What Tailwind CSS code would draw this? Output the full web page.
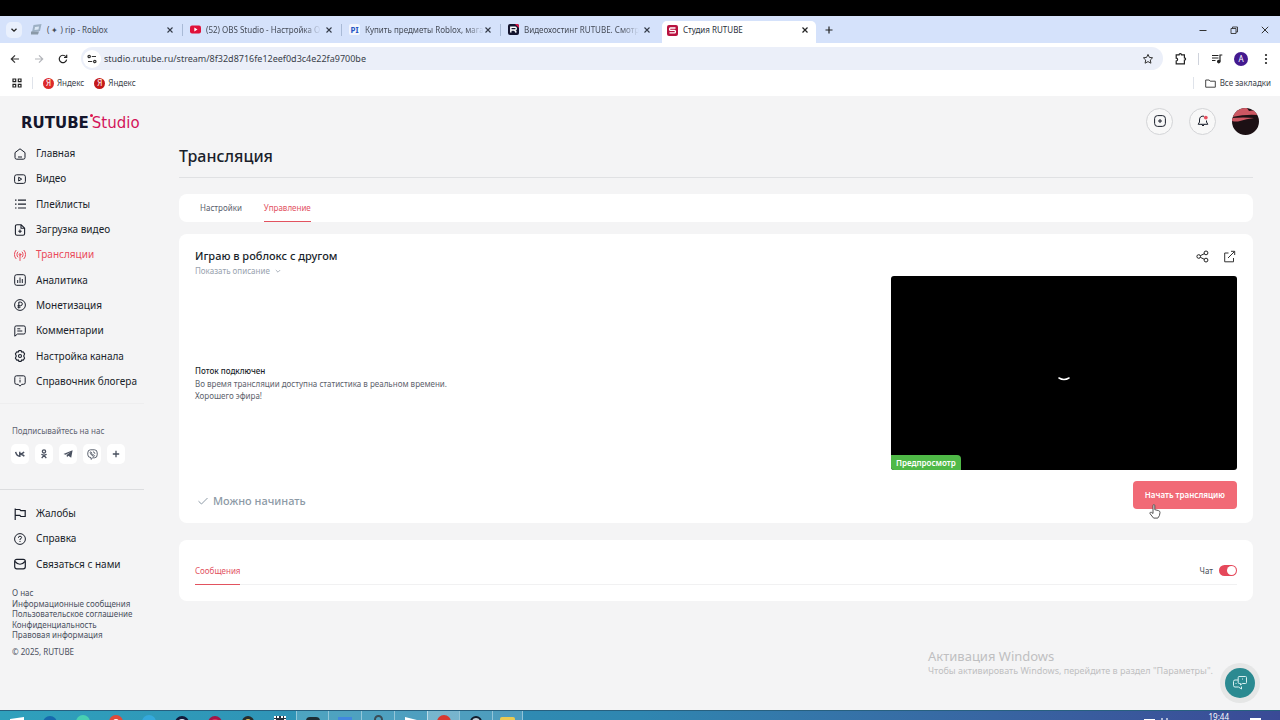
<!DOCTYPE html>
<html lang="ru">
<head>
<meta charset="utf-8">
<meta name="viewport" content="width=device-width, initial-scale=1">
<title>Студия RUTUBE</title>
<script src="https://cdn.jsdelivr.net/npm/@tailwindcss/browser@4"></script>
</head>
<body class="flex h-screen flex-col overflow-hidden bg-[#f4f4f5] font-['Noto_Sans','Open_Sans',sans-serif] text-[#1a1f2b]">

<div class="h-4 shrink-0 bg-black"></div>

<!-- Browser tab strip -->
<div class="flex h-[27px] shrink-0 items-end bg-[#d5e2fb] text-[8px] text-[#454b57]">
  <div class="flex h-full w-[26px] items-center pl-[6px]">
    <button aria-label="Поиск вкладок" class="flex size-4 items-center justify-center rounded-[5px] bg-[#e9f0fd]">
      <svg class="size-2" viewBox="0 0 8 8" fill="none" stroke="#222" stroke-width="1.3"><path d="M1.5 2.8 4 5.2l2.500-2.400"/></svg>
    </button>
  </div>
  <div class="flex h-full w-[159px] items-center pr-[2px] pl-[5px]">
    <svg class="size-[11px] shrink-0" viewBox="0 0 11 11"><path d="M2.500 1 10.500 0 9 7 1 8z" fill="#9db0c4"/><path d="M4 3 8 2.500 7.500 5.500 3.500 6z" fill="#dbe8f5"/><path d="M0 7.500h8l-1 3H0z" fill="#8a99a8"/></svg>
    <span class="ml-[5px] flex-1 whitespace-nowrap">( ✦ ) rip - Roblox</span>
    <button aria-label="Закрыть" class="mr-2 ml-1 shrink-0"><svg class="size-2" viewBox="0 0 8 8" stroke="#333a48" stroke-width="1.100"><path d="m1.500 1.500 5 5m0-5-5 5"/></svg></button>
    <span class="h-3 w-px bg-[#a9bad6]"></span>
  </div>
  <div class="flex h-full w-[159px] items-center pr-[2px] pl-[5px]">
    <svg class="size-[11px] shrink-0" viewBox="0 0 11 11"><rect y="1.500" width="11" height="8" rx="2" fill="#e0113a"/><path d="m4.300 3.600 3.200 1.900-3.200 1.900z" fill="#fff"/></svg>
    <span class="ml-[5px] flex-1 whitespace-nowrap [mask-image:linear-gradient(to_right,#000_85%,transparent)]">(52) OBS Studio - Настройка O</span>
    <button aria-label="Закрыть" class="mr-2 ml-1 shrink-0"><svg class="size-2" viewBox="0 0 8 8" stroke="#333a48" stroke-width="1.100"><path d="m1.500 1.500 5 5m0-5-5 5"/></svg></button>
    <span class="h-3 w-px bg-[#a9bad6]"></span>
  </div>
  <div class="flex h-full w-[159px] items-center pr-[2px] pl-[5px]">
    <span class="flex size-[11px] shrink-0 items-center justify-center rounded-[2px] bg-[#f3f6fd] text-[8px] leading-none font-bold text-[#2756c4]">PI</span>
    <span class="ml-[5px] flex-1 whitespace-nowrap [mask-image:linear-gradient(to_right,#000_85%,transparent)]">Купить предметы Roblox, мага</span>
    <button aria-label="Закрыть" class="mr-2 shrink-0"><svg class="size-2" viewBox="0 0 8 8" stroke="#333a48" stroke-width="1.100"><path d="m1.500 1.500 5 5m0-5-5 5"/></svg></button>
    <span class="h-3 w-px bg-[#a9bad6]"></span>
  </div>
  <div class="flex h-full w-[159px] items-center pr-[2px] pl-[5px]">
    <svg class="size-[11px] shrink-0" viewBox="0 0 11 11"><rect width="11" height="11" rx="2" fill="#14142e"/><path d="M7 0h2a2 2 0 0 1 2 2v2z" fill="#e2174b"/><path d="M2.800 8.500V3.200h4.400q1 0 1 1v.8q0 1-1 1H3m3.500 0 1.800 2.500" fill="none" stroke="#fff" stroke-width="1.400"/></svg>
    <span class="ml-[5px] flex-1 whitespace-nowrap [mask-image:linear-gradient(to_right,#000_85%,transparent)]">Видеохостинг RUTUBE. Смотр</span>
    <button aria-label="Закрыть" class="mr-[9px] ml-1 shrink-0"><svg class="size-2" viewBox="0 0 8 8" stroke="#333a48" stroke-width="1.100"><path d="m1.500 1.500 5 5m0-5-5 5"/></svg></button>
  </div>
  <div class="flex h-[22px] w-[154px] items-center rounded-t-[5px] bg-white pb-1 pl-[5px] text-[#2b303b]">
    <svg class="size-[11px] shrink-0" viewBox="0 0 11 11"><rect width="11" height="11" rx="2" fill="#b8123f"/><path d="M8.500 3H3.500q-.9 0-.9.900v.6q0 .9.900.9h4q.9 0 .9.900v.7q0 .9-.9.900H2.500" fill="none" stroke="#fff" stroke-width="1.300"/></svg>
    <span class="ml-[5px] flex-1 whitespace-nowrap">Студия RUTUBE</span>
    <button aria-label="Закрыть" class="mr-[7px] ml-2 shrink-0"><svg class="size-2" viewBox="0 0 8 8" stroke="#222" stroke-width="1.200"><path d="m1.500 1.500 5 5m0-5-5 5"/></svg></button>
  </div>
  <button aria-label="Новая вкладка" class="ml-2 flex h-full items-center"><svg class="size-[10px]" viewBox="0 0 10 10" stroke="#222" stroke-width="1.200"><path d="M5 1.500v7M1.500 5h7"/></svg></button>
  <div class="ml-auto flex h-full items-center gap-[21px] pr-[10px]">
    <button aria-label="Свернуть"><svg class="size-[10px]" viewBox="0 0 10 10" stroke="#333"><path d="M1.500 5.500h7"/></svg></button>
    <button aria-label="Восстановить"><svg class="size-[10px]" viewBox="0 0 10 10" fill="none" stroke="#333" stroke-width=".9"><path d="M2 3.500h5v5H2zM3.500 3.500V2h5v5H7"/></svg></button>
    <button aria-label="Закрыть окно"><svg class="size-[10px]" viewBox="0 0 10 10" stroke="#333"><path d="m1.800 1.800 6.400 6.400m0-6.400L1.800 8.200"/></svg></button>
  </div>
</div>

<!-- Address bar -->
<div class="flex h-[31px] shrink-0 items-center bg-white pr-2 pl-[10px]">
  <div class="flex w-[71px] items-center gap-[14px]">
    <button aria-label="Назад"><svg class="size-[10px]" viewBox="0 0 10 10" fill="none" stroke="#333" stroke-width="1.200"><path d="M9 5H1.500M5 1.300 1.300 5 5 8.700"/></svg></button>
    <button aria-label="Вперёд"><svg class="size-[10px]" viewBox="0 0 10 10" fill="none" stroke="#b3b5ba" stroke-width="1.200"><path d="M1 5h7.500M5 1.300 8.700 5 5 8.700"/></svg></button>
    <button aria-label="Обновить"><svg class="size-[10px]" viewBox="0 0 10 10" fill="none" stroke="#222" stroke-width="1.200"><path d="M8.600 5.600A3.700 3.700 0 1 1 7.800 2.600M8.700.8v2.700H6"/></svg></button>
  </div>
  <div class="flex h-[23px] flex-1 items-center rounded-full bg-[#ebeff9] pr-[9px] pl-[2px]">
    <button aria-label="Сведения о сайте" class="flex size-[18px] items-center justify-center rounded-full bg-white"><svg class="size-[10px]" viewBox="0 0 10 10" fill="none" stroke="#333" stroke-width="1.200"><circle cx="2.200" cy="2.500" r="1.200"/><path d="M4.800 2.500H9M1 7.500h4.200"/><circle cx="7.800" cy="7.500" r="1.200"/></svg></button>
    <input aria-label="Адрес" type="text" value="studio.rutube.ru/stream/8f32d8716fe12eef0d3c4e22fa9700be" class="ml-[3px] min-w-0 flex-1 bg-transparent text-[9px] text-[#3a3f4a] outline-none">
    <button aria-label="В закладки"><svg class="size-3" viewBox="0 0 12 12" fill="none" stroke="#333"><path d="m6 1.400 1.400 3 3.200.4-2.300 2.200.6 3.200L6 8.600l-2.900 1.600.6-3.200L1.400 4.800l3.200-.4z"/></svg></button>
  </div>
  <div class="flex items-center pl-[12px]">
    <button aria-label="Расширения"><svg class="size-3" viewBox="0 0 12 12" fill="none" stroke="#222" stroke-width="1.200"><path d="M1.200 1.800h2.900a1.200 1.200 0 0 1 2.400 0h2.900v3a1.200 1.200 0 0 1 0 2.400v3.600H1.200V8a1.400 1.400 0 0 0 0-2.800z"/></svg></button>
    <span class="ml-[11px] h-3 w-px bg-[#cfd3dc]"></span>
    <button aria-label="Медиа" class="ml-[12px]"><svg class="size-3" viewBox="0 0 12 12" fill="none" stroke="#222" stroke-width="1.200"><path d="M1 2.500h6.500M1 5h6.500M1 7.500h3.500M9 8.500V2h2.300"/><circle cx="7.800" cy="8.600" r="1.200" fill="#222"/></svg></button>
    <button class="ml-[11px] flex size-[14px] items-center justify-center rounded-full bg-[#43198f] text-[8px] leading-none text-white">A</button>
    <button aria-label="Меню" class="ml-[12px]"><svg class="size-3" viewBox="0 0 12 12" fill="#222"><circle cx="6" cy="2" r="1.100"/><circle cx="6" cy="6" r="1.100"/><circle cx="6" cy="10" r="1.100"/></svg></button>
  </div>
</div>

<!-- Bookmarks -->
<div class="flex h-[22px] shrink-0 items-start bg-white pr-[9px] pl-[12px] text-[8px] leading-[18px] text-[#3a3f4a]">
  <button aria-label="Приложения" class="flex h-[18px] items-center"><svg class="size-[10px]" viewBox="0 0 10 10" fill="none" stroke="#222" stroke-width="1.200"><path d="M1 1h2.700v2.700H1zM6.300 1H9v2.700H6.300zM1 6.300h2.700V9H1zM6.300 6.300H9V9H6.300z"/></svg></button>
  <span class="mt-[3px] ml-[10px] h-3 w-px bg-[#dfe3ea]"></span>
  <a href="#" class="ml-[10px] flex items-center gap-[3px]"><span class="flex size-[11px] items-center justify-center rounded-full bg-[#dc2a2a] text-[8px] leading-none text-white">Я</span>Яндекс</a>
  <a href="#" class="ml-[10px] flex items-center gap-[3px]"><span class="flex size-[11px] items-center justify-center rounded-full bg-[#c41a1a] text-[8px] leading-none text-white">Я</span>Яндекс</a>
  <span class="mt-[3px] ml-auto h-3 w-px bg-[#dfe3ea]"></span>
  <a href="#" class="ml-[11px] flex items-center gap-1"><svg class="size-[11px]" viewBox="0 0 11 11" fill="none" stroke="#444"><path d="M.7 2h3.500l1 1.200h5.100v6H.7z"/></svg>Все закладки</a>
</div>

<!-- Page -->
<div class="relative flex min-h-0 flex-1">
  <aside class="w-36 shrink-0">
    <a href="#" class="mt-[17px] ml-[21px] flex h-5 items-center gap-[3px] font-['DejaVu_Sans',sans-serif] text-[15px] leading-5 text-[#d3145a]"><span class="font-bold text-[#14162c]">RUTUBE</span><span class="relative">Studio<i class="absolute top-px -left-[2px] size-[3px] rounded-full bg-[#e0134f]"></i></span></a>
    <nav class="mt-[8px] grid h-[253px] auto-rows-fr pl-[14px] text-[10px]">
      <a href="#" class="flex items-center gap-[10px]"><svg class="size-3" viewBox="0 0 12 12" fill="none" stroke="currentColor" stroke-linejoin="round"><path d="M1 4.600 6 .8l5 3.800v4.900q0 1.700-1.700 1.700H2.700Q1 11.200 1 9.500zM4 9h4"/></svg>Главная</a>
      <a href="#" class="flex items-center gap-[10px]"><svg class="size-3" viewBox="0 0 12 12" fill="none" stroke="currentColor" stroke-linejoin="round"><rect x=".6" y="1.800" width="10.800" height="8.600" rx="2"/><path d="m4.700 4.200 3 1.900-3 1.900z"/></svg>Видео</a>
      <a href="#" class="flex items-center gap-[10px]"><svg class="size-3" viewBox="0 0 12 12" fill="none" stroke="currentColor" stroke-width="1.200"><path d="M4 2.200h8M4 6.100h8M4 10h8M1 2.200h1.500M1 6.100h1.500M1 10h1.500"/></svg>Плейлисты</a>
      <a href="#" class="flex items-center gap-[10px]"><svg class="size-3" viewBox="0 0 12 12" fill="none" stroke="currentColor" stroke-width="1.100" stroke-linejoin="round"><path d="M7 .7H3Q1.400.7 1.400 2.300v7.500q0 1.500 1.600 1.500h6q1.600 0 1.600-1.500V4.200zV4.200h3.600M6 5.500v3.400M4.300 7.200h3.400"/></svg>Загрузка видео</a>
      <a href="#" class="flex items-center gap-[10px] text-[#ea4a5a]"><svg class="size-3" viewBox="0 0 12 12" fill="none" stroke="currentColor" stroke-linecap="round"><path d="M2 1.300a6 6 0 0 0 0 8.400M10 1.300a6 6 0 0 1 0 8.400M3.800 3a3.500 3.500 0 0 0 0 5M8.200 3a3.500 3.500 0 0 1 0 5M6 6.500v5"/><circle cx="6" cy="5.500" r=".9"/></svg>Трансляции</a>
      <a href="#" class="flex items-center gap-[10px]"><svg class="size-3" viewBox="0 0 12 12" fill="none" stroke="currentColor"><rect x=".7" y=".7" width="10.600" height="10.600" rx="2"/><path d="M3.700 9V6M6 9V3.500M8.300 9V5"/></svg>Аналитика</a>
      <a href="#" class="flex items-center gap-[10px]"><svg class="size-3" viewBox="0 0 12 12" fill="none" stroke="currentColor"><circle cx="6" cy="6" r="5.400"/><path d="M4.800 9.500V3.100h1.700a1.800 1.800 0 0 1 0 3.600H3.500M3.500 8.200h3"/></svg>Монетизация</a>
      <a href="#" class="flex items-center gap-[10px]"><svg class="size-3" viewBox="0 0 12 12" fill="none" stroke="currentColor" stroke-linejoin="round"><path d="M.8 11.200V2.300Q.8.900 2.200.9h7.600q1.500 0 1.500 1.400v5.200q0 1.500-1.500 1.500H3.500zM3.300 3.800h3M3.300 6h5"/></svg>Комментарии</a>
      <a href="#" class="flex items-center gap-[10px]"><svg class="size-3" viewBox="0 0 12 12" fill="none" stroke="currentColor" stroke-width="1.100" stroke-linejoin="round"><path d="M4.800.6h2.400l.5 1.500 1.500-.3 1.400 2.100L9.700 6l.9 2.100-1.400 2.100-1.500-.3-.5 1.500H4.800l-.5-1.500-1.500.3-1.400-2.100L2.300 6l-.9-2.100 1.400-2.100 1.500.3z"/><circle cx="6" cy="6" r="1.500"/></svg>Настройка канала</a>
      <a href="#" class="flex items-center gap-[10px]"><svg class="size-3" viewBox="0 0 12 12" fill="none" stroke="currentColor" stroke-linejoin="round"><path d="M2.500.8h7q1.700 0 1.700 1.700v5.200q0 1.600-1.700 1.600H7.800L6 11.200 4.200 9.300H2.500Q.8 9.300.8 7.700V2.500Q.8.800 2.500.8zM6 4.700v2.800M6 2.700v1"/></svg>Справочник блогера</a>
    </nav>
    <div class="mt-[9px] border-t border-[#eeeeef] pt-[21px] pl-3">
      <p class="text-[8px] leading-3 text-[#5d6270]">Подписывайтесь на нас</p>
      <div class="mt-[7px] -ml-px flex gap-[6px] text-[#4a5160]">
        <a href="#" aria-label="VK" class="flex h-5 w-[18px] items-center justify-center rounded-[5px] bg-white"><svg class="size-[10px]" viewBox="0 0 10 10" fill="none" stroke="currentColor" stroke-width="1.500"><path d="M.6 2.800Q1.500 7 4.800 7.200V2.800M9 2.800Q8 4.700 5 5q2.800.3 4.300 2.300"/></svg></a>
        <a href="#" aria-label="Одноклассники" class="flex h-5 w-[18px] items-center justify-center rounded-[5px] bg-white"><svg class="size-[10px]" viewBox="0 0 10 10" fill="none" stroke="currentColor" stroke-width="1.300"><circle cx="5" cy="2.400" r="1.600"/><path d="M2.400 5.300Q5 7 7.600 5.300M5 6.300 2.700 9.200M5 6.300l2.300 2.900"/></svg></a>
        <a href="#" aria-label="Telegram" class="flex h-5 w-[18px] items-center justify-center rounded-[5px] bg-white"><svg class="size-[10px]" viewBox="0 0 10 10" fill="currentColor"><path d="M.5 4.900 9.600 1.300 8.200 8.700 5.300 6.700 4 8.200 3.600 6l4-3-5 2.800z"/></svg></a>
        <a href="#" aria-label="Viber" class="flex h-5 w-[18px] items-center justify-center rounded-[5px] bg-white"><svg class="size-[11px]" viewBox="0 0 11 11" fill="none" stroke="currentColor" stroke-width=".9"><path d="M3.500.8h4q2.700 0 2.700 3v2q0 3-2.700 3H5.700L4 10.400V8.600Q.8 8.500.8 5.800v-2q0-3 2.700-3z"/><path d="M3.500 2.800q-.6.700 0 1.800 1 2 2.900 2.700.9.200 1.200-.6L6.400 5.800l-.8.300-1-1.200.4-.8zM6 2.800q1.800.2 1.900 2"/></svg></a>
        <a href="#" aria-label="Ещё" class="flex h-5 w-[18px] items-center justify-center rounded-[5px] bg-white"><svg class="size-[10px]" viewBox="0 0 10 10" stroke="currentColor" stroke-width="1.300"><path d="M5 1.800v6.400M1.800 5h6.400"/></svg></a>
      </div>
    </div>
    <div class="mt-[25px] border-t border-[#dcdddf] pt-[11px]">
      <div class="grid h-[76px] auto-rows-fr pl-[14px] text-[10px]">
        <a href="#" class="flex items-center gap-[10px]"><svg class="size-3" viewBox="0 0 12 12" fill="none" stroke="currentColor" stroke-width="1.200"><path d="M1.200 12V.6M1.200 1.500h4.600l1 1.200h4.400v5.800H6.800l-1-1.200H1.200"/></svg>Жалобы</a>
        <a href="#" class="flex items-center gap-[10px]"><svg class="size-3" viewBox="0 0 12 12" fill="none" stroke="currentColor"><circle cx="6" cy="6" r="5.400"/><path d="M4.400 4.800q0-1.600 1.600-1.600t1.600 1.400q0 .9-1.600 1.600v.9M6 8v1"/></svg>Справка</a>
        <a href="#" class="flex items-center gap-[10px]"><svg class="size-3" viewBox="0 0 12 12" fill="none" stroke="currentColor" stroke-width="1.200"><rect x=".7" y="1.300" width="10.600" height="9.500" rx="2"/><path d="M1 3.500Q6 9 11 3.500"/></svg>Связаться с нами</a>
      </div>
      <div class="mt-[11px] grid h-[53px] auto-rows-fr pl-3 text-[8px] leading-[10px] whitespace-nowrap text-[#4a505e]">
        <a href="#">О нас</a><a href="#">Информационные сообщения</a><a href="#">Пользовательское соглашение</a><a href="#">Конфиденциальность</a><a href="#">Правовая информация</a>
      </div>
      <p class="mt-[6px] pl-3 text-[8px] leading-[10px] text-[#4a505e]">© 2025, RUTUBE</p>
    </div>
  </aside>

  <main class="min-w-0 flex-1 pr-[27px] pl-[35px]">
    <div class="-mr-[6px] flex h-[50px] items-center justify-end gap-4">
      <button aria-label="Создать" class="flex size-[27px] items-center justify-center rounded-full border border-[#d3d4d7] bg-[#f8f8f8]"><svg class="size-3" viewBox="0 0 12 12" fill="none" stroke="#1a1f2b"><rect x=".6" y=".6" width="10.800" height="10.800" rx="3"/><path d="M6 4v4M4 6h4"/></svg></button>
      <button aria-label="Уведомления" class="flex size-[27px] items-center justify-center rounded-full border border-[#d3d4d7] bg-[#f8f8f8]"><svg class="size-3" viewBox="0 0 12 12" fill="none" stroke="#1a1f2b"><path d="M7 1.200Q2.500.6 2.500 5v2L1.200 9.300h9.600L9.500 7V5.500M4.500 9.500q1.500 3 3 0"/><circle cx="8.800" cy="2.600" r="1.900" fill="#e8505f" stroke="none"/></svg></button>
      <button aria-label="Профиль"><svg class="size-[27px]" viewBox="0 0 27 27"><defs><clipPath id="ava"><circle cx="13.500" cy="13.500" r="13.500"/></clipPath></defs><g clip-path="url(#ava)"><path fill="#1c1014" d="M0 0h27v27H0z"/><path fill="#cc5762" d="M2 0h13l2 3 7-1 2 5Q14 6 0 9zM0 10q11-1 22 0-8 1-14 3-4 1-8 0z"/></g></svg></button>
    </div>
    <h1 class="border-b border-[#e0e1e3] pb-[11px] text-[16px] leading-5 font-medium">Трансляция</h1>
    <div class="mt-4 flex h-[28px] gap-[22px] rounded-lg bg-white px-[21px] text-[8px]">
      <a href="#" class="flex items-center text-[#5a606d]">Настройки</a>
      <a href="#" class="flex items-center border-b border-[#e2525f] text-[#e2525f]">Управление</a>
    </div>

    <section class="mt-3 rounded-lg bg-white px-4 pt-[13px] pb-[14px]">
      <div class="flex justify-between gap-4">
        <div class="min-w-0">
          <h2 class="text-[11px] leading-[18px] font-medium">Играю в роблокс с другом</h2>
          <button class="flex items-center gap-[5px] text-[8px] leading-3 text-[#98a2ae]">Показать описание<svg class="size-[6px]" viewBox="0 0 6 6" fill="none" stroke="currentColor" stroke-width=".8"><path d="m.8 2 2.200 2.200L5.200 2"/></svg></button>
          <h3 class="mt-[88px] text-[8px] leading-3 font-medium">Поток подключен</h3>
          <p class="mt-[1px] text-[8px] leading-3 text-[#5d626c]">Во время трансляции доступна статистика в реальном времени.<br>Хорошего эфира!</p>
        </div>
        <div class="w-[346px] shrink-0">
          <div class="mb-[10px] flex h-[19px] items-center justify-end gap-[14px] pr-[1px]">
            <button aria-label="Поделиться"><svg class="size-[13px]" viewBox="0 0 13 13" fill="none" stroke="#222"><circle cx="2.700" cy="6.500" r="1.800"/><circle cx="10" cy="2.900" r="1.900"/><circle cx="10" cy="10.100" r="1.900"/><path d="m4.300 5.700 4-2M4.300 7.300l4 2"/></svg></button>
            <button aria-label="Открыть"><svg class="size-[13px]" viewBox="0 0 13 13" fill="none" stroke="#333"><path d="M5.500 3H1.700v8.800h8.800V8M5 8l6.500-6.500M8 1.300h3.700V5"/></svg></button>
          </div>
          <div class="relative flex h-[194px] items-center justify-center overflow-hidden rounded-[3px] bg-black">
            <svg class="mt-[12px] h-[6px] w-3" viewBox="0 0 12 6" fill="none" stroke="#fff" stroke-width="1.500" stroke-linecap="round"><path d="M1 2q5 3 10 0"/></svg>
            <span class="absolute bottom-0 left-0 rounded-tr-[4px] bg-[#4fb947] px-[5px] text-[8px] leading-[15px] font-semibold text-white">Предпросмотр</span>
          </div>
        </div>
      </div>
      <div class="mt-[11px] flex items-start justify-between">
        <p class="mt-3 flex items-center gap-[5px] pl-[3px] text-[11px] leading-4 font-medium text-[#8d9aa6]"><svg class="size-[10px]" viewBox="0 0 10 10" fill="none" stroke="currentColor"><path d="m.5 5.200 3 2.800L9.500 2"/></svg>Можно начинать</p>
        <div class="relative">
          <button class="block h-7 rounded bg-[#f16a76] px-3 text-[8px] font-semibold text-white">Начать трансляцию</button>
          <svg class="absolute top-[23px] left-[16px] h-[15px] w-3" viewBox="0 0 12 15" fill="#fff" stroke="#444" stroke-width=".9" stroke-linejoin="round"><path d="M4 8V1.700q0-1.100.9-1.100t.9 1.100v4l3.700.9q1.600.4 1.500 2-.1 3.300-2.200 5.500H4.600L1.200 9.900q-.9-1.200.2-1.600T4 9.500z"/></svg>
        </div>
      </div>
    </section>

    <section class="mt-[17px] rounded-lg bg-white px-4 pt-[17px] pb-4">
      <div class="flex h-[28px] items-stretch justify-between border-b border-[#f1f1f2]">
        <a href="#" class="-mb-px flex items-center border-b border-[#e2525f] text-[8px] text-[#e2525f]">Сообщения</a>
        <label class="flex items-center gap-[6px] text-[8px] text-[#4b505b]">Чат<input type="checkbox" checked class="h-[11px] w-[18px] appearance-none rounded-full bg-[#9aa] p-px before:block before:size-[9px] before:rounded-full before:bg-white checked:bg-[#e5485a] checked:before:ml-[7px]"></label>
      </div>
    </section>
  </main>

  <!-- System watermark and chat launcher -->
  <div class="absolute right-[24px] bottom-[32px] w-[328px] whitespace-nowrap text-[#bfbfc1]">
    <p class="text-[13px] leading-4">Активация Windows</p>
    <p class="text-[9px] leading-[14px]">Чтобы активировать Windows, перейдите в раздел "Параметры".</p>
  </div>
  <button aria-label="Чат поддержки" class="absolute right-[20px] bottom-[7px] flex size-10 items-center justify-center rounded-full bg-[#e5e6e6]">
    <span class="flex size-[30px] items-center justify-center rounded-full bg-[#2b8a91]"><svg class="size-4" viewBox="0 0 16 16" fill="none" stroke="#d9f0f1" stroke-linejoin="round"><path d="M7 1.500h6.500q1 0 1 1v5q0 1-1 1h-3.200L8.500 10V8.500H7.200q-1 0-1-1v-5q0-1 .8-1zM6 5H3Q1.500 5 1.500 6.500v4Q1.500 12 3 12h3.500L9.500 14v-2.500M3.500 8.500h1M10 4h1"/></svg></span>
  </button>
</div>

<!-- Taskbar -->
<footer class="flex h-[10px] shrink-0 overflow-hidden border-t border-[#27607f] bg-linear-to-r from-[#2fa0bc] via-[#2f86b0] to-[#3a4a96] pr-[19px]">
  <span class="flex w-[33px] justify-center pt-[6px]"><svg class="h-3 w-[14px]" viewBox="0 0 14 12" fill="#fff"><path d="M0 2 14 0v12H0z"/></svg></span>
  <span class="flex w-[33px] justify-center pt-[5px]"><i class="size-[14px] rounded-full bg-[#1769ad]"></i></span>
  <span class="flex w-[33px] justify-center pt-[4px]"><i class="size-[14px] rounded-full bg-[#48cfb2]"></i></span>
  <span class="flex w-[33px] justify-center pt-[4px]"><i class="size-[14px] rounded-full border-4 border-[#e04a3a] bg-white"></i></span>
  <span class="flex w-[33px] justify-center pt-[4px]"><i class="size-[14px] rounded-full bg-[#35a9dc]"></i></span>
  <span class="flex w-[33px] justify-center pt-[5px]"><i class="size-[14px] rounded-full border-3 border-[#121b3c] bg-[#dfe7f5]"></i></span>
  <span class="flex w-[33px] justify-center pt-[5px]"><i class="size-[14px] rounded-full border-3 border-[#a31546] bg-[#d83260]"></i></span>
  <span class="flex w-[33px] justify-center pt-[5px]"><i class="size-3 rounded-full border-3 border-[#282c2c] bg-[#e0c254]"></i></span>
  <span class="flex w-[32px] justify-center pt-[5px]"><i class="h-3 w-[12px] border-2 border-dotted border-white bg-[#25313c]"></i></span>
  <span class="flex w-[32px] justify-center border-l border-white/40 bg-white/15 pt-[6px]"><i class="h-3 w-[14px] rounded-sm bg-[#1d2d34]"></i></span>
  <span class="flex w-[33px] justify-center border-l border-white/40 bg-white/15 pt-[6px]"><i class="h-3 w-[14px] bg-[#4187e0]"></i></span>
  <span class="flex w-[33px] justify-center border-l border-white/40 bg-white/15 pt-[4px]"><i class="h-3 w-[9px] rounded-full border-2 border-[#3b4c56]"></i></span>
  <span class="flex w-[33px] justify-center border-l border-white/40 bg-white/15 pt-[5px]"><svg class="size-3" viewBox="0 0 12 12" fill="#fff"><path d="M0 1 12 4v8H0z"/></svg></span>
  <span class="flex w-[32px] justify-center border-l border-white/50 bg-white/35 pt-[4px]"><i class="size-[14px] rounded-full bg-[#d8382f]"></i></span>
  <span class="flex w-[33px] justify-center border-l border-white/40 bg-white/15 pt-[5px]"><i class="size-3 rounded-full border-2 border-[#111c2c] bg-[#c6d0d8]"></i></span>
  <span class="flex w-[31px] justify-center border-x border-white/40 bg-white/15 pt-[6px]"><i class="h-3 w-[15px] rounded-t-xs bg-[#e9ca52]"></i></span>
  <span class="ml-auto flex text-[8px] text-white"><i class="mt-[8px] h-3 w-[11px] bg-white"></i><i class="mt-[7px] ml-[6px] h-3 w-[2px] bg-white/60"></i><i class="mt-[7px] ml-[3px] h-3 w-[2px] bg-white/60"></i><span class="ml-[41px] leading-[11px]">19:44</span><i class="mt-[7px] ml-[21px] h-3 w-[11px] bg-white"></i></span>
</footer>
</body>
</html>
